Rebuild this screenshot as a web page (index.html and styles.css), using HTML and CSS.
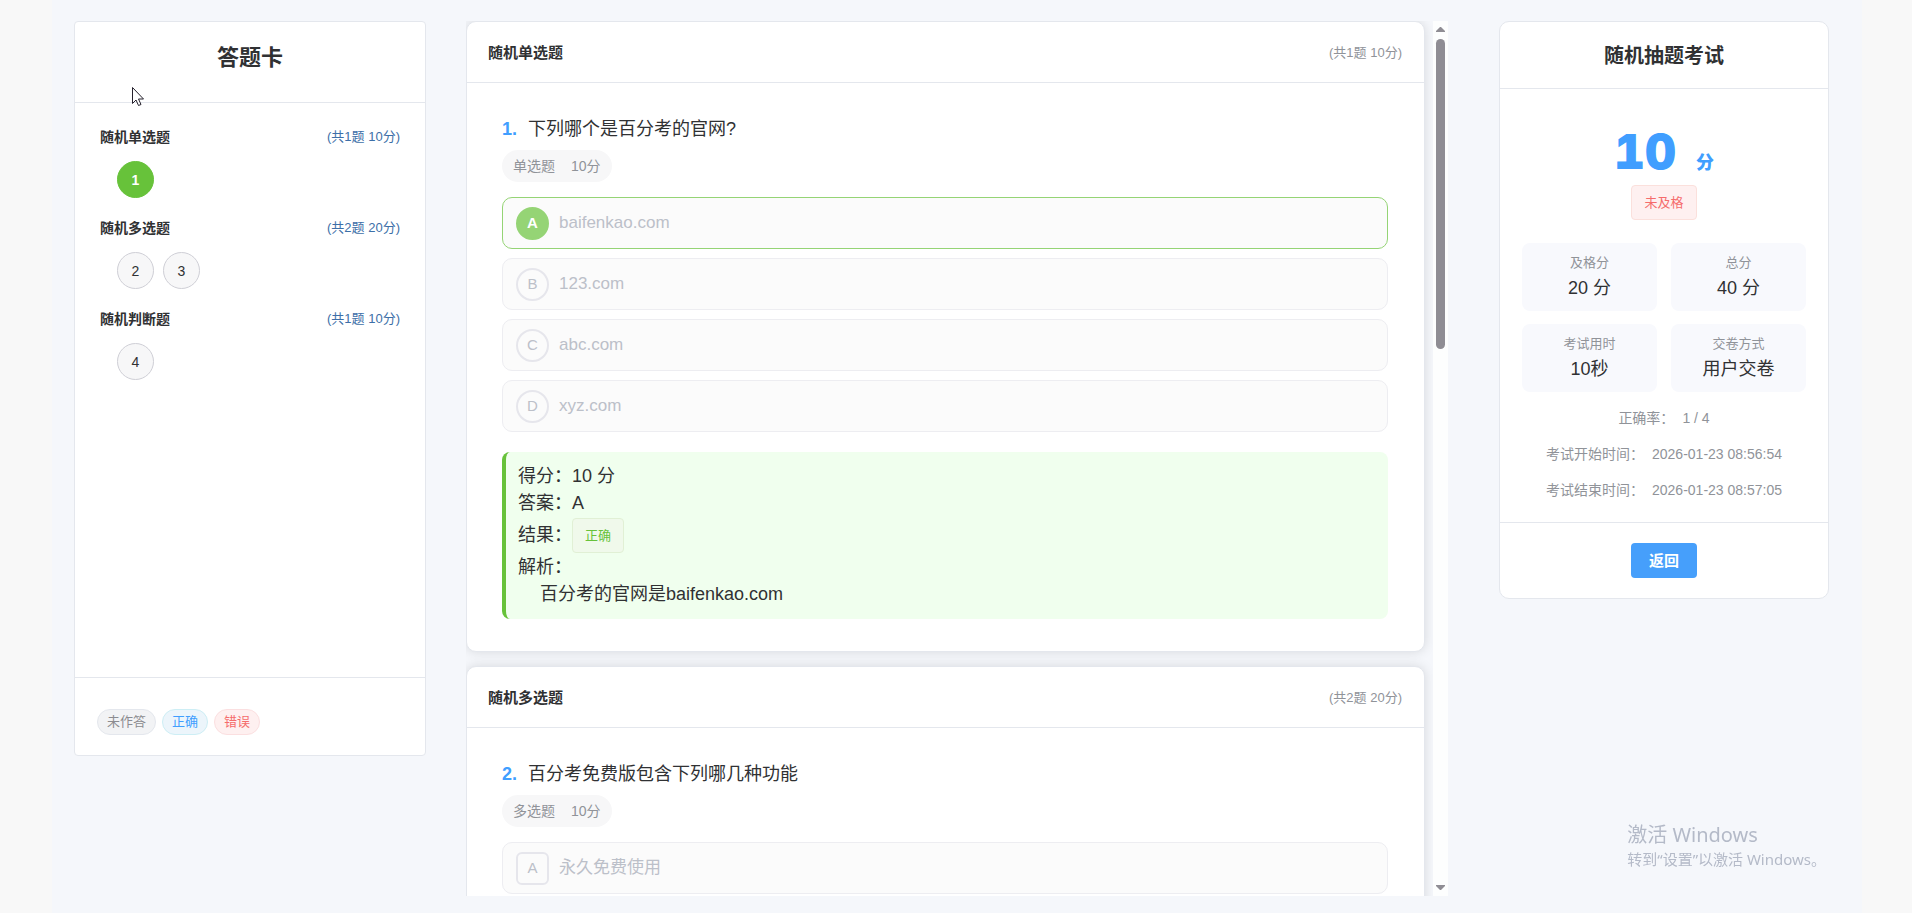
FILE: index.html
```html
<!DOCTYPE html>
<html lang="zh-CN">
<head>
<meta charset="utf-8">
<meta name="viewport" content="width=device-width, initial-scale=1">
<title>随机抽题考试</title>
<link rel="stylesheet" href="styles.css">
</head>
<body>
<div class="page">
  <aside class="sheet">
    <h1 class="sheet-title">答题卡</h1>
    <div class="sheet-body">
      <section class="group">
        <div class="group-head"><h2 class="group-name">随机单选题</h2><span class="group-info">(共1题 10分)</span></div>
        <div class="numbers"><button class="number right" type="button">1</button></div>
      </section>
      <section class="group">
        <div class="group-head"><h2 class="group-name">随机多选题</h2><span class="group-info">(共2题 20分)</span></div>
        <div class="numbers"><button class="number" type="button">2</button><button class="number" type="button">3</button></div>
      </section>
      <section class="group">
        <div class="group-head"><h2 class="group-name">随机判断题</h2><span class="group-info">(共1题 10分)</span></div>
        <div class="numbers"><button class="number" type="button">4</button></div>
      </section>
    </div>
    <div class="legend">
      <span class="pill pill-none">未作答</span>
      <span class="pill pill-right">正确</span>
      <span class="pill pill-wrong">错误</span>
    </div>
  </aside>

  <main class="paper">
    <div class="paper-scroll">
      <section class="card">
        <header class="card-head"><h2 class="card-title">随机单选题</h2><span class="card-info">(共1题 10分)</span></header>
        <div class="card-body">
          <h3 class="question"><span class="question-no">1.</span>下列哪个是百分考的官网?</h3>
          <div class="meta"><span>单选题</span><span>10分</span></div>
          <div class="options">
            <label class="option chosen"><span class="mark"><input class="mark-box" type="radio" name="q1" checked disabled><span class="mark-letter">A</span></span>baifenkao.com</label>
            <label class="option"><span class="mark"><input class="mark-box" type="radio" name="q1" disabled><span class="mark-letter">B</span></span>123.com</label>
            <label class="option"><span class="mark"><input class="mark-box" type="radio" name="q1" disabled><span class="mark-letter">C</span></span>abc.com</label>
            <label class="option"><span class="mark"><input class="mark-box" type="radio" name="q1" disabled><span class="mark-letter">D</span></span>xyz.com</label>
          </div>
          <div class="result">
            <div class="result-row"><span>得分：</span><span>10 分</span></div>
            <div class="result-row"><span>答案：</span><span>A</span></div>
            <div class="result-row result-state"><span>结果：</span><span class="tag tag-right">正确</span></div>
            <div class="result-row"><span>解析：</span></div>
            <p class="analysis">百分考的官网是baifenkao.com</p>
          </div>
        </div>
      </section>
      <section class="card">
        <header class="card-head"><h2 class="card-title">随机多选题</h2><span class="card-info">(共2题 20分)</span></header>
        <div class="card-body">
          <h3 class="question"><span class="question-no">2.</span>百分考免费版包含下列哪几种功能</h3>
          <div class="meta"><span>多选题</span><span>10分</span></div>
          <div class="options">
            <label class="option"><span class="mark"><input class="mark-box square" type="checkbox" name="q2" disabled><span class="mark-letter">A</span></span>永久免费使用</label>
          </div>
        </div>
      </section>
    </div>
    <div class="scrollbar" aria-hidden="true">
      <svg class="arrow" width="9" height="5" viewBox="0 0 9 5"><path d="M4 0h1l4 4v1H0V4z"/></svg>
      <div class="track"><div class="thumb"></div></div>
      <svg class="arrow" width="9" height="5" viewBox="0 0 9 5"><path d="M0 0h9v1L5 5H4L0 1z"/></svg>
    </div>
  </main>

  <aside class="summary">
    <h2 class="summary-title">随机抽题考试</h2>
    <div class="summary-body">
      <div class="score"><span class="score-value">10</span><span class="score-unit">分</span></div>
      <span class="tag tag-fail">未及格</span>
      <div class="stats">
        <div class="stat"><span class="stat-label">及格分</span><span class="stat-value">20 分</span></div>
        <div class="stat"><span class="stat-label">总分</span><span class="stat-value">40 分</span></div>
        <div class="stat"><span class="stat-label">考试用时</span><span class="stat-value">10秒</span></div>
        <div class="stat"><span class="stat-label">交卷方式</span><span class="stat-value">用户交卷</span></div>
      </div>
      <div class="facts">
        <div class="fact"><span>正确率：</span><span>1 / 4</span></div>
        <div class="fact"><span>考试开始时间：</span><span>2026-01-23 08:56:54</span></div>
        <div class="fact"><span>考试结束时间：</span><span>2026-01-23 08:57:05</span></div>
      </div>
    </div>
    <footer class="summary-foot"><button class="back" type="button">返回</button></footer>
  </aside>
</div>

<div class="watermark"><span class="watermark-title">激活 Windows</span><span>转到“设置”以激活 Windows。</span></div>
<svg class="pointer" width="13" height="20" viewBox="0 0 13 20" aria-hidden="true"><path d="M.5.5v16l3.5-3.5 2.5 5.5 2.5-1-2.5-5.5h5z" fill="#fff" stroke="#25212c"/></svg>
</body>
</html>
```
FILE: styles.css
```css
* { box-sizing: border-box; }

body {
  margin: 0;
  background: #f8f8f8;
  color: #303133;
  font-family: "Liberation Sans", "Noto Sans CJK SC", sans-serif;
  font-size: 14px;
  line-height: 20px;
}

h1, h2, h3, p { margin: 0; }
button, input { font: inherit; margin: 0; }

.page {
  display: flex;
  align-items: flex-start;
  min-height: 100vh;
  margin: 0 50px 0 52px;
  padding: 21px 33px 17px 22px;
  background: #f5f7fb;
}

/* Answer sheet */
.sheet {
  display: flex;
  flex-direction: column;
  flex: 0 0 352px;
  height: calc(100vh - 178px);
  margin-right: 40px;
  background: #fff;
  border: 1px solid #e4e7ed;
  border-radius: 4px;
}
.sheet-title {
  padding: 21px 20px 29px;
  border-bottom: 1px solid #e4e7ed;
  font-size: 22px;
  line-height: 30px;
  text-align: center;
}
.sheet-body {
  display: flex;
  flex: 1;
  flex-direction: column;
  gap: 20px;
  padding: 24px 25px;
  overflow: hidden;
}
.group-head { display: flex; justify-content: space-between; }
.group-name { font-size: 14px; }
.group-info { color: #3d6fa8; font-size: 13px; }
.numbers { display: flex; gap: 9px; padding: 14px 17px 0; }
.number {
  width: 37px;
  height: 37px;
  padding: 0;
  background: #f7f7f8;
  border: 1px solid #cfcfd6;
  border-radius: 50%;
  color: #303133;
  font-size: 14px;
}
.number.right { background: #67c23a; border-color: #67c23a; color: #fff; font-weight: bold; }

.legend {
  display: flex;
  gap: 6px;
  padding: 31px 22px 20px;
  border-top: 1px solid #e4e7ed;
}
.pill {
  padding: 0 9px;
  border: 1px solid;
  border-radius: 13px;
  font-size: 13px;
  line-height: 24px;
}
.pill-none { background: #f2f3f5; border-color: #e4e7ed; color: #8c8c90; }
.pill-right { background: #ecf5fb; border-color: #cdeef5; color: #409eff; }
.pill-wrong { background: #fef0f0; border-color: #fbdfe0; color: #f56c6c; }

/* Question paper */
.paper { display: flex; flex: 1; height: calc(100vh - 38px); min-width: 0; }
.paper-scroll {
  display: flex;
  flex: 1;
  flex-direction: column;
  gap: 14px;
  min-width: 0;
  padding-right: 8px;
  overflow: auto;
  scrollbar-width: none;
}
.card {
  flex: none;
  background: #fff;
  border: 1px solid #e4e7ed;
  border-radius: 10px;
  box-shadow: 0 0 12px rgba(0, 0, 0, 0.12);
}
.card-head {
  display: flex;
  align-items: center;
  justify-content: space-between;
  padding: 16px 22px 14px 21px;
  border-bottom: 1px solid #e4e7ed;
  line-height: 30px;
}
.card-title { font-size: 15px; }
.card-info { color: #909399; font-size: 13px; }
.card-body { padding: 32px 36px 32px 35px; }
.question {
  display: flex;
  gap: 11px;
  font-size: 18px;
  font-weight: normal;
  line-height: 28px;
}
.question-no { color: #409eff; font-weight: bold; }
.meta {
  display: flex;
  gap: 16px;
  width: fit-content;
  margin: 7px 0 15px;
  padding: 0 11px;
  background: #f7f7f8;
  border-radius: 16px;
  color: #909399;
  line-height: 32px;
}
.options { display: flex; flex-direction: column; gap: 9px; }
.option {
  display: flex;
  align-items: center;
  gap: 10px;
  min-height: 52px;
  padding: 0 13px;
  background: #fbfbfb;
  border: 1px solid #ededf1;
  border-radius: 10px;
  color: #bcc0c9;
  font-size: 17px;
}
.option.chosen { border-color: #95d475; }
.mark { display: grid; place-items: center; }
.mark-box, .mark-letter { grid-area: 1 / 1; }
.mark-box {
  appearance: none;
  width: 33px;
  height: 33px;
  border: 2px solid #e6e6ec;
  border-radius: 50%;
}
.mark-box.square { border-radius: 6px; }
.mark-box:checked { background: #95d475; border-color: #95d475; }
.mark-letter { font-size: 15px; }
.chosen .mark-letter { color: #fff; font-weight: bold; }

.result {
  margin-top: 20px;
  padding: 11px 12px;
  background: #f0ffee;
  border-left: 4px solid #67c23a;
  border-radius: 8px;
  font-size: 18px;
  line-height: 27px;
}
.result-row { display: flex; align-items: center; }
.result-state { padding: 1px 0; }
.analysis { padding-left: 22px; }
.tag {
  padding: 0 12px;
  border: 1px solid;
  border-radius: 4px;
  font-size: 13px;
  line-height: 33px;
}
.tag-right { background: #f0f9eb; border-color: #e1f0d5; color: #67c23a; }
.tag-fail { background: #fef0f0; border-color: #fbe0dc; color: #f56c6c; }

.scrollbar {
  display: flex;
  flex: 0 0 15px;
  flex-direction: column;
  align-items: center;
  gap: 7px;
  padding: 6px 0;
  background: #fdfefe;
}
.arrow { flex: none; fill: #8f8d94; }
.track { flex: 1; width: 9px; }
.thumb { height: 37%; background: #8f8d94; border-radius: 5px; }

/* Exam summary */
.summary {
  flex: 0 0 330px;
  margin-left: 51px;
  background: #fff;
  border: 1px solid #e4e7ed;
  border-radius: 10px;
}
.summary-title {
  padding: 19px 22px 17px;
  border-bottom: 1px solid #e4e7ed;
  font-size: 20px;
  line-height: 30px;
  text-align: center;
}
.summary-body {
  display: flex;
  flex-direction: column;
  align-items: center;
  padding: 33px 22px 22px;
}
.score {
  display: flex;
  align-items: baseline;
  gap: 20px;
  margin-bottom: 3px;
  color: #409eff;
  font-weight: 900;
}
.score-value {
  font-family: Inter, "Liberation Sans", sans-serif;
  font-size: 48px;
  font-variant-numeric: tabular-nums;
  line-height: 60px;
}
.score-unit { font-size: 18px; }
.stats {
  display: grid;
  grid-template-columns: 1fr 1fr;
  gap: 13px 14px;
  align-self: stretch;
  margin-top: 23px;
}
.stat {
  display: flex;
  flex-direction: column;
  align-items: center;
  padding: 10px 8px 8px;
  background: #f8f9fd;
  border-radius: 8px;
}
.stat-label { color: #909399; font-size: 13px; }
.stat-value { font-size: 18px; line-height: 30px; }
.facts {
  display: flex;
  flex-direction: column;
  align-items: center;
  gap: 16px;
  margin-top: 16px;
  color: #909399;
}
.fact { display: flex; gap: 8px; }
.summary-foot {
  display: flex;
  justify-content: center;
  padding: 20px;
  border-top: 1px solid #e4e7ed;
}
.back {
  padding: 0 18px;
  background: #469ffb;
  border: 0;
  border-radius: 4px;
  color: #fff;
  font-size: 15px;
  font-weight: bold;
  line-height: 35px;
}

/* Desktop overlays */
.watermark {
  position: fixed;
  right: 86px;
  bottom: 43px;
  display: flex;
  flex-direction: column;
  color: #b4bac8;
  font-family: "Noto Sans", "Noto Sans CJK SC", sans-serif;
  font-size: 15px;
  line-height: 22px;
}
.watermark-title { font-size: 20px; line-height: 26px; }
.pointer { position: absolute; left: 132px; top: 87px; }
```
